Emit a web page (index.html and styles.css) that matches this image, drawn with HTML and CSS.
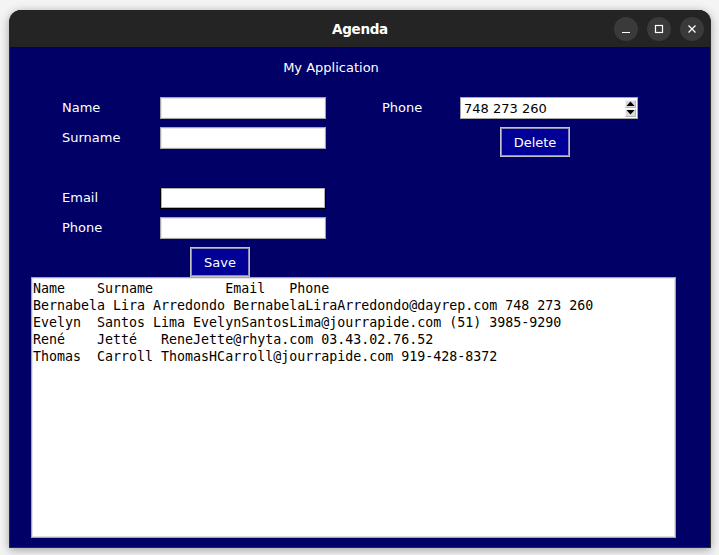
FILE: index.html
```html
<!DOCTYPE html>
<html>
<head>
<meta charset="utf-8">
<title>Agenda</title>
<link rel="stylesheet" href="styles.css">
</head>
<body>
<div class="window">
  <div class="titlebar">
    <div class="title">Agenda</div>
    <div class="controls">
      <span class="ctl"><svg width="10" height="10" viewBox="0 0 10 10"><line x1="1" y1="8.5" x2="9" y2="8.5" stroke="#fff" stroke-width="1.2"/></svg></span>
      <span class="ctl"><svg width="10" height="10" viewBox="0 0 10 10"><rect x="1.5" y="1.5" width="7" height="7" fill="none" stroke="#fff" stroke-width="1.2"/></svg></span>
      <span class="ctl"><svg width="10" height="10" viewBox="0 0 10 10"><path d="M1.5 1.5 L8.5 8.5 M8.5 1.5 L1.5 8.5" stroke="#fff" stroke-width="1.2"/></svg></span>
    </div>
  </div>
  <div class="content">
    <div class="app-title">My Application</div>
    <div class="form">
      <div class="label r1 c1">Name</div>
      <div class="entry r1 c2"></div>
      <div class="label r1 c3">Phone</div>
      <div class="spin r1 c4">
        <span class="spin-text">748 273 260</span>
        <span class="arrows">
          <span class="arr"><svg width="9" height="5" viewBox="0 0 9 5"><polygon points="0.5,5 8.5,5 4.5,0.5" fill="#000"/></svg></span>
          <span class="arr"><svg width="9" height="5" viewBox="0 0 9 5"><polygon points="0.5,0 8.5,0 4.5,4.5" fill="#000"/></svg></span>
        </span>
      </div>
      <div class="label r2 c1">Surname</div>
      <div class="entry r2 c2"></div>
      <div class="btn delete r2 c4">Delete</div>
      <div class="label r4 c1">Email</div>
      <div class="entry focus r4 c2"></div>
      <div class="label r5 c1">Phone</div>
      <div class="entry r5 c2"></div>
      <div class="btn save r6 c2">Save</div>
    </div>
    <div class="textbox">Name    Surname         Email   Phone
Bernabela Lira Arredondo BernabelaLiraArredondo@dayrep.com 748 273 260
Evelyn  Santos Lima EvelynSantosLima@jourrapide.com (51) 3985-9290
René    Jetté   ReneJette@rhyta.com 03.43.02.76.52
Thomas  Carroll ThomasHCarroll@jourrapide.com 919-428-8372</div>
  </div>
</div>
</body>
</html>
```
FILE: styles.css
```css
html, body {
  margin: 0;
  padding: 0;
}
body {
  background: #f4f4f4;
  width: 719px;
  height: 555px;
  overflow: hidden;
  font-family: "DejaVu Sans", sans-serif;
}
.window {
  margin: 10px 0 0 9px;
  width: 702px;
  height: 538px;
  box-sizing: border-box;
  border: 1px solid #2a2a2a;
  border-top: none;
  border-radius: 12px 12px 0 0;
  overflow: hidden;
  background: #000066;
  box-shadow: 0 2px 10px rgba(0,0,0,0.35);
}
.titlebar {
  height: 37px;
  background: #242424;
  display: flex;
  align-items: center;
  justify-content: center;
  position: relative;
}
.title {
  color: #ffffff;
  font-weight: bold;
  font-size: 13.5px;
  font-family: "DejaVu Sans", sans-serif;
  letter-spacing: -0.3px;
}
.controls {
  position: absolute;
  right: 6px;
  top: 7px;
  display: flex;
  gap: 9px;
}
.ctl {
  width: 24px;
  height: 24px;
  border-radius: 50%;
  background: #3a3a3a;
  display: flex;
  align-items: center;
  justify-content: center;
}
.content {
  height: 500px;
  padding-top: 13px;
  box-sizing: border-box;
  color: #ffffff;
  font-size: 13px;
}
.app-title {
  width: 642px;
  text-align: center;
  height: 15px;
  line-height: 15px;
}
.form {
  margin-top: 22px;
  display: grid;
  grid-template-columns: 52px 98px 166px 56px 78px 178px;
  grid-template-rows: repeat(6, 30px);
  align-items: start;
}
.r1 { grid-row: 1; }
.r2 { grid-row: 2; }
.r4 { grid-row: 4; }
.r5 { grid-row: 5; }
.r6 { grid-row: 6; }
.c1 { grid-column: 2; }
.c2 { grid-column: 3; }
.c3 { grid-column: 5; }
.c4 { grid-column: 6; }
.label {
  height: 22px;
  line-height: 21px;
  color: #ffffff;
}
.entry {
  height: 22px;
  box-sizing: border-box;
  background: #ffffff;
  border: 1px solid #a6a6a6;
  box-shadow: inset 1px 1px 0 #e6e6e6, inset -1px -1px 0 #f2f2f2;
}
.entry.focus {
  border: 1px solid #000000;
  box-shadow: inset 0 0 0 1px #b0b0b0;
}
.spin {
  height: 22px;
  box-sizing: border-box;
  background: #ffffff;
  border: 1px solid #a6a6a6;
  display: flex;
  align-items: center;
  justify-content: space-between;
  color: #000000;
}
.spin-text {
  padding-left: 3px;
  font-size: 13px;
}
.arrows {
  display: flex;
  flex-direction: column;
  gap: 1px;
  margin-right: 1px;
}
.arr {
  width: 11px;
  height: 8px;
  background: #d9d9d9;
  border: 1px solid #b8b8b8;
  border-left-color: #f4f4f4;
  border-top-color: #f4f4f4;
  box-sizing: border-box;
  display: flex;
  align-items: center;
  justify-content: center;
}
.btn {
  height: 30px;
  box-sizing: border-box;
  background: #000096;
  border: 1px solid #c4c4c4;
  box-shadow: inset 0 0 0 1px #8a8ab0;
  color: #ffffff;
  display: flex;
  align-items: center;
  justify-content: center;
}
.delete {
  width: 70px;
  margin-left: 40px;
}
.save {
  width: 60px;
  margin-left: 30px;
}
.textbox {
  margin-left: 21px;
  width: 645px;
  height: 261px;
  box-sizing: border-box;
  background: #ffffff;
  border: 1px solid #a6a6a6;
  box-shadow: inset 1px 1px 0 #e6e6e6, inset -1px -1px 0 #e0e0e0;
  color: #000000;
  font-family: "DejaVu Sans Mono", monospace;
  font-size: 13.3px;
  line-height: 17px;
  white-space: pre;
  padding: 2px 0 0 1px;
  overflow: hidden;
}
```
